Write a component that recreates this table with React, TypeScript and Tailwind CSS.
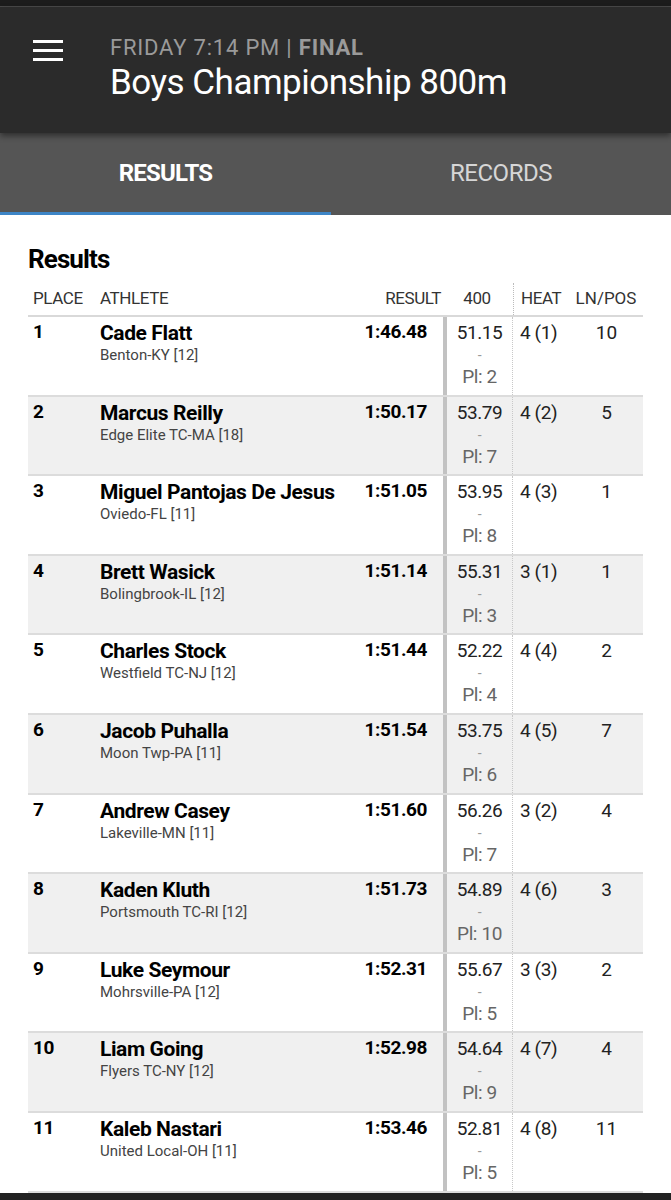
import React from "react";

type Row = {
  place: number;
  name: string;
  team: string;
  result: string;
  split: string;
  pl: number;
  heat: string;
  lane: number;
};

const rows: Row[] = [
  { place: 1, name: "Cade Flatt", team: "Benton-KY [12]", result: "1:46.48", split: "51.15", pl: 2, heat: "4 (1)", lane: 10 },
  { place: 2, name: "Marcus Reilly", team: "Edge Elite TC-MA [18]", result: "1:50.17", split: "53.79", pl: 7, heat: "4 (2)", lane: 5 },
  { place: 3, name: "Miguel Pantojas De Jesus", team: "Oviedo-FL [11]", result: "1:51.05", split: "53.95", pl: 8, heat: "4 (3)", lane: 1 },
  { place: 4, name: "Brett Wasick", team: "Bolingbrook-IL [12]", result: "1:51.14", split: "55.31", pl: 3, heat: "3 (1)", lane: 1 },
  { place: 5, name: "Charles Stock", team: "Westfield TC-NJ [12]", result: "1:51.44", split: "52.22", pl: 4, heat: "4 (4)", lane: 2 },
  { place: 6, name: "Jacob Puhalla", team: "Moon Twp-PA [11]", result: "1:51.54", split: "53.75", pl: 6, heat: "4 (5)", lane: 7 },
  { place: 7, name: "Andrew Casey", team: "Lakeville-MN [11]", result: "1:51.60", split: "56.26", pl: 7, heat: "3 (2)", lane: 4 },
  { place: 8, name: "Kaden Kluth", team: "Portsmouth TC-RI [12]", result: "1:51.73", split: "54.89", pl: 10, heat: "4 (6)", lane: 3 },
  { place: 9, name: "Luke Seymour", team: "Mohrsville-PA [12]", result: "1:52.31", split: "55.67", pl: 5, heat: "3 (3)", lane: 2 },
  { place: 10, name: "Liam Going", team: "Flyers TC-NY [12]", result: "1:52.98", split: "54.64", pl: 9, heat: "4 (7)", lane: 4 },
  { place: 11, name: "Kaleb Nastari", team: "United Local-OH [11]", result: "1:53.46", split: "52.81", pl: 5, heat: "4 (8)", lane: 11 },
];

export default function App() {
  return (
    <div
      className="w-[671px] h-[1200px] overflow-hidden bg-white flex flex-col"
      style={{ fontFamily: "Roboto, 'Liberation Sans', sans-serif" }}
    >
      <div className="shrink-0 h-[6px] bg-[#1c1c1c]" />
      <div className="shrink-0 h-[1px] bg-[#4a4a4a]" />
      <header className="shrink-0 h-[126px] bg-[#2b2b2b] flex items-start relative z-10 shadow-[0_3px_6px_rgba(0,0,0,0.45)]">
        <div className="pl-[33px] pt-[33px] w-[110px]">
          <div className="flex flex-col gap-[6px] w-[30px]">
            <span className="h-[3px] bg-white" />
            <span className="h-[3px] bg-white" />
            <span className="h-[3px] bg-white" />
          </div>
        </div>
        <div className="pt-[27px]">
          <div className="text-[22px] leading-[28px] text-[#9a9a9a] tracking-[0.8px]">
            FRIDAY 7:14 PM | <span className="font-bold">FINAL</span>
          </div>
          <div className="text-[35px] leading-[42px] text-white tracking-[-0.5px]">
            Boys Championship 800m
          </div>
        </div>
      </header>
      <nav className="shrink-0 h-[82px] bg-[#555555] flex relative">
        <div className="w-[331px] flex flex-col">
          <div className="flex-1 flex items-center justify-center text-[24px] font-bold text-white tracking-[-0.8px]">
            RESULTS
          </div>
          <div className="h-[3px] bg-[#3d85c6]" />
        </div>
        <div className="flex-1 flex items-center justify-center text-[24px] text-[#d6d6d6] tracking-[-0.5px] pb-[3px]">
          RECORDS
        </div>
      </nav>
      <main className="shrink-0 px-[28px] pt-[29px]">
        <h2 className="text-[26px] leading-[30px] font-bold text-black tracking-[-0.9px]">Results</h2>
        <div className="w-[615px] mt-[9px]">
          <div className="flex h-[34px] items-center border-b-2 border-[#d9d9d9] text-[17px] text-[#333] tracking-[-0.4px]">
            <div className="w-[72px] pl-[5px]">PLACE</div>
            <div className="flex-1">ATHLETE</div>
            <div className="w-[100px] text-right">RESULT</div>
            <div className="w-[72px] text-center">400</div>
            <div className="w-[56px] h-full flex items-center pl-[7px] border-l border-dotted border-[#bbb]">HEAT</div>
            <div className="w-[74px] text-center tracking-[0px]">LN/POS</div>
          </div>
          {rows.map((r, i) => (
            <div
              key={r.place}
              className={`flex h-[79.6px] border-b-2 border-[#dcdcdc] ${i % 2 === 1 ? "bg-[#f0f0f0]" : "bg-white"}`}
            >
              <div className="w-[72px] pl-[5px] pt-[3px] text-[19px] leading-[24px] font-bold text-black tracking-[-0.4px]">{r.place}</div>
              <div className="flex-1 pt-[3px]">
                <div className="text-[21px] leading-[26px] font-bold text-black whitespace-nowrap tracking-[-0.4px]">{r.name}</div>
                <div className="text-[15px] leading-[18px] text-[#444] whitespace-nowrap">{r.team}</div>
              </div>
              <div className="w-[82px] text-right pr-[16px] pt-[3px] text-[19px] leading-[24px] font-bold text-black tracking-[-0.4px]">{r.result}</div>
              <div className="w-[4px] bg-[#c2c2c2]" />
              <div className="w-[65px] flex flex-col items-center pt-[4px] text-[#222] tracking-[-0.4px]">
                <div className="text-[19px] leading-[24px]">{r.split}</div>
                <div className="text-[14px] leading-[20px] text-[#999]">-</div>
                <div className="text-[19px] leading-[24px] text-[#666]">Pl: {r.pl}</div>
              </div>
              <div className="w-[58px] pl-[7px] pt-[4px] text-[19px] leading-[24px] text-[#222] border-l border-dotted border-[#c8c8c8] tracking-[-0.4px]">
                {r.heat}
              </div>
              <div className="w-[73px] text-center pt-[4px] text-[19px] leading-[24px] text-[#222]">{r.lane}</div>
            </div>
          ))}
        </div>
      </main>
      <div className="mt-auto shrink-0 h-[7px] bg-[#222]" />
    </div>
  );
}
